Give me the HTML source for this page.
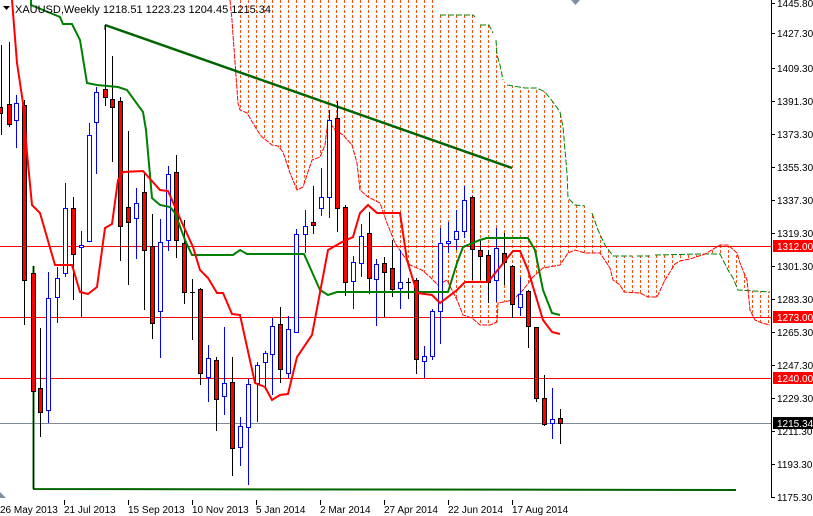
<!DOCTYPE html>
<html><head><meta charset="utf-8"><style>
html,body{margin:0;padding:0;background:#fff;width:813px;height:516px;overflow:hidden}
svg{display:block;font-family:"Liberation Sans",sans-serif}
</style></head><body>
<svg width="813" height="516" viewBox="0 0 813 516" xmlns="http://www.w3.org/2000/svg">
<defs>
<clipPath id="cl"><path d="M230,0 L435,0 L440,15 L473,15 L475,17 L480,25 L489,25 L493,33 L496,40 L497,55 L500,65 L503,80 L507,85 L525,88 L537,88 L545,92 L553,102 L560,112 L563,127 L567,173 L568,198 L575,205 L585,206 L592,213 L598,230 L605,245 L613,256 L700,254 L720,254 L722,258 L728,270 L733,278 L738,290 L770,292 L770,325 L762,323 L755,320 L750,310 L747,280 L740,263 L737,253 L728,245 L720,245 L705,254 L690,259 L680,261 L675,264 L670,272 L665,280 L657,297 L648,297 L640,293 L624,292 L620,285 L613,280 L610,268 L600,253 L585,253 L575,250 L568,253 L560,265 L543,268 L533,277 L523,290 L513,300 L498,303 L497,322 L490,325 L480,325 L472,318 L463,315 L457,300 L447,280 L438,285 L430,277 L422,270 L410,265 L395,243 L387,223 L380,203 L368,197 L360,190 L357,163 L352,145 L343,135 L335,130 L328,120 L325,145 L320,157 L312,160 L308,172 L303,187 L297,190 L290,173 L283,152 L278,146 L272,145 L262,137 L257,130 L247,113 L240,110 L238,103 L233,35 L232,20 Z"/></clipPath>
</defs>
<!-- cloud hatch -->
<g clip-path="url(#cl)" stroke="#ff5014" stroke-width="1" stroke-dasharray="3,2">
<path d="M240.5,0V330M248.5,0V330M256.5,0V330M264.5,0V330M272.5,0V330M280.5,0V330M288.5,0V330M296.5,0V330M304.5,0V330M312.5,0V330M320.5,0V330M328.5,0V330M336.5,0V330M344.5,0V330M352.5,0V330M360.5,0V330M368.5,0V330M376.5,0V330M384.5,0V330M392.5,0V330M400.5,0V330M408.5,0V330M416.5,0V330M424.5,0V330M432.5,0V330M440.5,0V330M448.5,0V330M456.5,0V330M464.5,0V330M472.5,0V330M480.5,0V330M488.5,0V330M496.5,0V330M504.5,0V330M512.5,0V330M520.5,0V330M528.5,0V330M536.5,0V330M544.5,0V330M552.5,0V330M560.5,0V330M568.5,0V330M576.5,0V330M584.5,0V330M592.5,0V330M600.5,0V330M608.5,0V330M616.5,0V330M624.5,0V330M632.5,0V330M640.5,0V330M648.5,0V330M656.5,0V330M664.5,0V330M672.5,0V330M680.5,0V330M688.5,0V330M696.5,0V330M704.5,0V330M712.5,0V330M720.5,0V330M728.5,0V330M736.5,0V330M744.5,0V330M752.5,0V330M760.5,0V330M768.5,0V330"/>
</g>
<!-- span B (green thin dashed) -->
<path d="M440,15 L473,15 L475,17 M480,25 L489,25 L493,33 M496,40 L497,55 L500,65 L503,80 M507,85 L525,88 L537,88 L545,92 L553,102 L560,112 L563,127 L567,173 L568,198 L575,205 L585,206 M592,213 L598,230 L605,245 L613,256 L632,256 M637,256 L650,256 M655,255 L700,254 L720,254 L722,258 L728,270 L733,278 L738,290 L770,292" fill="none" stroke="#008000" stroke-width="1" stroke-dasharray="6,2"/>
<!-- span A (red thin) -->
<path d="M230,0 L232,20 L233,35 L238,103 L240,110 L247,113 L257,130 L262,137 L272,145 L278,146 L283,152 L290,173 L297,190 L303,187 L308,172 L312,160 L320,157 L325,145 L328,120 L335,130 L343,135 L352,145 L357,163 L360,190 L368,197 L380,203 L387,223 L395,243 L410,265 L422,270 L430,277 L438,285 L447,280 L457,300 L463,315 L472,318 L480,325 L490,325 L497,322 L498,303 L513,300 L523,290 L533,277 L543,268 L560,265 L568,253 L575,250 L585,253 L600,253 L610,268 L613,280 L620,285 L624,292 L640,293 L648,297 L657,297 L665,280 L670,272 L675,264 L680,261 L690,259 L705,254 L720,245 L728,245 L737,253 L740,263 L747,280 L750,310 L755,320 L762,323 L770,325" fill="none" stroke="#ff0000" stroke-width="1" stroke-dasharray="5,1"/>
<!-- horizontal levels -->
<path d="M0,246.5H771M0,317.5H771M0,378.5H771" stroke="#ff0000" stroke-width="1"/>
<path d="M0,423.5H771" stroke="#7f8a96" stroke-width="1"/>
<!-- trendline -->
<path d="M105,25 L512,168" stroke="#006400" stroke-width="2.5" fill="none"/>
<path d="M105,25 V30" stroke="#000"/>
<!-- bottom green -->
<path d="M33.5,266 V489 M33,489 L736,490" stroke="#006400" stroke-width="2" fill="none"/>
<path d="M33.5,266 V489" stroke="#000" stroke-width="1"/>
<!-- candles -->
<g stroke-width="1">
<g stroke="#000" fill="#ff0000">
<path d="M1.5,45V135M9.5,42V127M24.5,100V325M33.5,266V488M40.5,328V437M73.5,197V300M105.5,25V106M112.5,56V162M120.5,97V261M128.5,131V285M144.5,173V310M152.5,214V339M176.5,155V258M184.5,220V304M192.5,279V340M200.5,288V385M216.5,357V431M232.5,357V476M280.5,307V383M313.5,186V234M337.5,101V232M345.5,205V296M369.5,212V294M384.5,257V317M392.5,240V297M408.5,278V299M416.5,278V374M472.5,196V280M480.5,239V280M488.5,250V303M504.5,233V285M512.5,265V318M528.5,290V348M536.5,327V402M544.5,375V426M560.5,409V444"/>
<path d="M190,292.5H195"/>
<path d="M406,282.5H411"/>
<rect x="-1.5" y="107.5" width="4" height="6"/>
<rect x="7.5" y="104.5" width="4" height="20"/>
<rect x="22.5" y="105.5" width="4" height="175"/>
<rect x="31.5" y="273.5" width="4" height="118"/>
<rect x="38.5" y="388.5" width="4" height="24"/>
<rect x="71.5" y="208.5" width="4" height="46"/>
<rect x="103.5" y="89.5" width="4" height="8"/>
<rect x="110.5" y="99.5" width="4" height="8"/>
<rect x="118.5" y="101.5" width="4" height="125"/>
<rect x="126.5" y="207.5" width="4" height="15"/>
<rect x="142.5" y="192.5" width="4" height="58"/>
<rect x="150.5" y="246.5" width="4" height="77"/>
<rect x="174.5" y="172.5" width="4" height="68"/>
<rect x="182.5" y="243.5" width="4" height="49"/>
<rect x="198.5" y="289.5" width="4" height="84"/>
<rect x="214.5" y="360.5" width="4" height="39"/>
<rect x="230.5" y="382.5" width="4" height="66"/>
<rect x="278.5" y="324.5" width="4" height="45"/>
<rect x="311.5" y="222.5" width="4" height="3"/>
<rect x="335.5" y="118.5" width="4" height="90"/>
<rect x="343.5" y="207.5" width="4" height="75"/>
<rect x="367.5" y="233.5" width="4" height="45"/>
<rect x="382.5" y="263.5" width="4" height="9"/>
<rect x="390.5" y="268.5" width="4" height="21"/>
<rect x="414.5" y="280.5" width="4" height="79"/>
<rect x="470.5" y="197.5" width="4" height="52"/>
<rect x="478.5" y="250.5" width="4" height="6"/>
<rect x="486.5" y="255.5" width="4" height="27"/>
<rect x="502.5" y="253.5" width="4" height="9"/>
<rect x="510.5" y="266.5" width="4" height="38"/>
<rect x="526.5" y="291.5" width="4" height="35"/>
<rect x="534.5" y="327.5" width="4" height="71"/>
<rect x="542.5" y="398.5" width="4" height="26"/>
<rect x="558.5" y="418.5" width="4" height="5"/>
</g>
<g stroke="#0000ff" fill="#fff">
<path d="M16.5,95V148M48.5,272V423M57.5,267V323M65.5,183V277M81.5,231V318M89.5,123V241M96.5,87V174M136.5,188V259M160.5,219V358M168.5,166V251M208.5,345V402M224.5,327V415M240.5,417V466M248.5,379V485M257.5,362V422M265.5,351V390M272.5,318V395M288.5,316V378M296.5,229V333M305.5,210V253M321.5,168V216M329.5,110V218M353.5,256V309M361.5,224V277M376.5,259V326M400.5,250V309M424.5,346V378M432.5,309V360M440.5,228V344M448.5,222V253M456.5,210V250M464.5,186V238M496.5,228V302M520.5,277V316M552.5,388V439"/>
<rect x="14.5" y="103.5" width="4" height="17"/>
<rect x="46.5" y="298.5" width="4" height="112"/>
<rect x="55.5" y="278.5" width="4" height="19"/>
<rect x="63.5" y="208.5" width="4" height="65"/>
<rect x="79.5" y="245.5" width="4" height="2"/>
<rect x="87.5" y="135.5" width="4" height="106"/>
<rect x="94.5" y="92.5" width="4" height="30"/>
<rect x="134.5" y="203.5" width="4" height="15"/>
<rect x="158.5" y="242.5" width="4" height="69"/>
<rect x="166.5" y="174.5" width="4" height="66"/>
<rect x="206.5" y="358.5" width="4" height="19"/>
<rect x="222.5" y="383.5" width="4" height="13"/>
<rect x="238.5" y="426.5" width="4" height="21"/>
<rect x="246.5" y="384.5" width="4" height="43"/>
<rect x="255.5" y="365.5" width="4" height="18"/>
<rect x="263.5" y="353.5" width="4" height="9"/>
<rect x="270.5" y="326.5" width="4" height="28"/>
<rect x="286.5" y="329.5" width="4" height="44"/>
<rect x="294.5" y="234.5" width="4" height="98"/>
<rect x="303.5" y="226.5" width="4" height="8"/>
<rect x="319.5" y="197.5" width="4" height="11"/>
<rect x="327.5" y="120.5" width="4" height="77"/>
<rect x="351.5" y="262.5" width="4" height="19"/>
<rect x="359.5" y="236.5" width="4" height="27"/>
<rect x="374.5" y="264.5" width="4" height="15"/>
<rect x="398.5" y="282.5" width="4" height="6"/>
<rect x="422.5" y="356.5" width="4" height="5"/>
<rect x="430.5" y="311.5" width="4" height="45"/>
<rect x="438.5" y="243.5" width="4" height="68"/>
<rect x="446.5" y="241.5" width="4" height="2"/>
<rect x="454.5" y="231.5" width="4" height="8"/>
<rect x="462.5" y="200.5" width="4" height="31"/>
<rect x="494.5" y="248.5" width="4" height="32"/>
<rect x="518.5" y="294.5" width="4" height="13"/>
<rect x="550.5" y="419.5" width="4" height="4"/>
</g>
</g>
<!-- kijun green -->
<path d="M31,0 L31,5 L60,17 L63,24 L72,24 L80,40 L87,83 L97,85 L118,87 L127,90 L143,112 L146,130 L152,198 L160,205 L170,207 L175,213 L185,240 L192,255 L233,255 L240,250 L247,254 L304,254 L320,290 L328,295 L337,292 L448,292 L457,263 L463,247 L480,240 L487,238 L528,238 L535,250 L543,290 L552,313 L560,315" fill="none" stroke="#008000" stroke-width="2"/>
<!-- tenkan red -->
<path d="M12,0 L17,63 L23,103 L27,153 L32,205 L40,213 L55,265 L72,265 L80,292 L88,294 L97,287 L105,228 L112,224 L118,180 L123,172 L143,171 L160,190 L168,191 L183,225 L193,247 L200,270 L208,278 L217,293 L223,293 L232,314 L240,315 L255,383 L265,387 L272,400 L280,395 L288,394 L297,357 L312,335 L328,250 L342,242 L353,237 L360,213 L368,205 L377,213 L400,213 L407,260 L417,293 L432,295 L440,303 L457,290 L465,282 L488,282 L513,251 L520,251 L528,270 L543,320 L552,332 L560,334" fill="none" stroke="#ff0000" stroke-width="2"/>
<!-- shift marker -->
<path d="M571,0 L580,0 L575.5,5 Z" fill="#8090a0"/>
<path d="M0,492 L6,498 L0,498 Z" fill="#8090a0"/>
<!-- header -->
<path d="M3,6 L10,6 L6.5,10 Z" fill="#000"/>
<text x="15" y="13" font-size="11" fill="#000">XAUUSD,Weekly  1218.51 1223.23 1204.45 1215.34</text>
<!-- right axis -->
<path d="M771.5,0V498" stroke="#000"/>
<g stroke="#000"><path d="M771,3.5h4M771,33.5h4M771,68.5h4M771,101.5h4M771,134.5h4M771,167.5h4M771,200.5h4M771,233.5h4M771,266.5h4M771,299.5h4M771,332.5h4M771,365.5h4M771,398.5h4M771,431.5h4M771,464.5h4M771,497.5h4"/></g>
<g font-size="10" fill="#000">
<text x="777" y="7">1445.80</text>
<text x="777" y="37">1427.30</text>
<text x="777" y="72">1409.30</text>
<text x="777" y="105">1391.30</text>
<text x="777" y="138">1373.30</text>
<text x="777" y="171">1355.30</text>
<text x="777" y="204">1337.30</text>
<text x="777" y="237">1319.30</text>
<text x="777" y="270">1301.30</text>
<text x="777" y="303">1283.30</text>
<text x="777" y="336">1265.30</text>
<text x="777" y="369">1247.30</text>
<text x="777" y="402">1229.30</text>
<text x="777" y="435">1211.30</text>
<text x="777" y="468">1193.30</text>
<text x="777" y="501">1175.30</text>
</g>
<rect x="773" y="240" width="40" height="12" fill="#ff0000"/>
<rect x="773" y="311" width="40" height="12" fill="#ff0000"/>
<rect x="773" y="372" width="40" height="12" fill="#ff0000"/>
<rect x="773" y="417" width="40" height="12" fill="#000"/>
<g font-size="10" fill="#fff">
<text x="777" y="250">1312.00</text>
<text x="777" y="321">1273.00</text>
<text x="777" y="382">1240.00</text>
<text x="777" y="427">1215.34</text>
</g>
<!-- bottom axis -->
<g stroke="#000"><path d="M64.5,500v5M128.5,500v5M192.5,500v5M256.5,500v5M320.5,500v5M384.5,500v5M448.5,500v5M512.5,500v5"/></g>
<g font-size="10" fill="#000">
<text x="0" y="513">26 May 2013</text>
<text x="64" y="513">21 Jul 2013</text>
<text x="128" y="513">15 Sep 2013</text>
<text x="192" y="513">10 Nov 2013</text>
<text x="256" y="513">5 Jan 2014</text>
<text x="320" y="513">2 Mar 2014</text>
<text x="384" y="513">27 Apr 2014</text>
<text x="448" y="513">22 Jun 2014</text>
<text x="512" y="513">17 Aug 2014</text>
</g>
</svg>
</body></html>
